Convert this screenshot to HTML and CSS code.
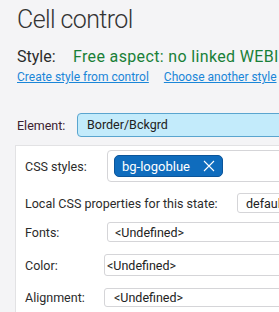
FILE: index.html
```html
<!DOCTYPE html>
<html>
<head>
<meta charset="utf-8">
<link rel="stylesheet" href="styles.css">
</head>
<body>
<div class="page">
  <h1 class="title">Cell control</h1>
  <div class="style-row">
    <span class="style-label">Style:</span>
    <span class="style-value">Free aspect: no linked WEBI</span>
  </div>
  <div class="links">
    <a class="link" href="#">Create style from control</a>
    <a class="link" href="#">Choose another style</a>
  </div>
  <div class="element-row">
    <span class="element-label">Element:</span>
    <div class="element-box">Border/Bckgrd</div>
  </div>
  <div class="panel">
    <div class="row row-css">
      <span class="label">CSS styles:</span>
      <div class="tag-box">
        <span class="tag">
          <span class="tag-text">bg-logoblue</span>
          <svg class="tag-x" width="12" height="12" viewBox="0 0 12 12"><path d="M1 1 L11 11 M11 1 L1 11" stroke="#fff" stroke-width="1.1" fill="none"/></svg>
        </span>
      </div>
    </div>
    <div class="row row-local">
      <span class="label label-wide">Local CSS properties for this state:</span>
      <div class="field field-local">default</div>
    </div>
    <div class="row row-fonts">
      <span class="label">Fonts:</span>
      <div class="field field-fonts">&lt;Undefined&gt;</div>
    </div>
    <div class="row row-color">
      <span class="label">Color:</span>
      <div class="field field-color">&lt;Undefined&gt;</div>
    </div>
    <div class="row row-align">
      <span class="label">Alignment:</span>
      <div class="field field-align">&lt;Undefined&gt;</div>
    </div>
  </div>
</div>
</body>
</html>
```
FILE: styles.css
```css
html, body {
  margin: 0;
  padding: 0;
  background: #f4f4f6;
  overflow: hidden;
}
body {
  width: 279px;
  height: 312px;
  font-family: Roboto, "Open Sans", sans-serif;
  color: #2b2b2b;
}
.page {
  padding-left: 17px;
  width: 500px;
}
.title {
  margin: 0;
  padding-top: 3px;
  font-size: 25px;
  font-weight: 300;
  line-height: 34px;
  color: #333;
  letter-spacing: -0.6px;
}
.style-row {
  display: flex;
  margin-top: 10px;
  font-size: 16px;
  line-height: 20px;
  white-space: nowrap;
}
.style-label {
  width: 56px;
  color: #2b2b2b;
}
.style-value {
  color: #198038;
  letter-spacing: 0.35px;
}
.links {
  display: flex;
  gap: 15px;
  margin-top: 2px;
  font-size: 12px;
  line-height: 16px;
  white-space: nowrap;
}
.link {
  color: #1a86d8;
  text-decoration: underline;
}
.element-row {
  display: flex;
  align-items: center;
  margin-top: 28px;
  height: 24px;
}
.element-label {
  width: 60px;
  font-size: 12.5px;
  color: #3a2230;
}
.element-box {
  flex: 1;
  height: 22px;
  line-height: 22px;
  border: 1px solid #5aa5cf;
  border-radius: 4px;
  background: #c3ebfb;
  padding-left: 9px;
  font-size: 12.5px;
  color: #222;
}
.panel {
  margin-top: 8px;
  margin-left: -2px;
  background: #fff;
  border: 1px solid #e2e2e4;
  padding: 4px 0 20px 9px;
  font-size: 12.5px;
}
.row {
  display: flex;
  align-items: center;
  white-space: nowrap;
}
.label {
  width: 82px;
  flex: none;
  color: #2b2b2b;
}
.label-wide {
  width: 212px;
}
.row-css { height: 32px; }
.row-local { height: 20px; margin-top: 11px; }
.row-fonts { height: 20px; margin-top: 9px; }
.row-color { height: 22px; margin-top: 12px; }
.row-align { height: 19px; margin-top: 12px; }
.tag-box {
  flex: 1;
  height: 30px;
  border: 1px solid #d5d5d8;
  border-radius: 4px;
  display: flex;
  align-items: center;
  padding-left: 6px;
}
.tag {
  display: flex;
  align-items: center;
  width: 109px;
  height: 22px;
  box-sizing: border-box;
  background: #0f6cbd;
  border: 1px solid #0b559a;
  border-radius: 5px;
  padding-left: 7px;
  color: #fff;
  font-size: 13px;
}
.tag-text {
  flex: 1;
}
.tag-x {
  margin-right: 7px;
}
.field {
  flex: 1;
  box-sizing: border-box;
  height: 100%;
  border: 1px solid #d5d5d8;
  border-radius: 3px;
  display: flex;
  align-items: center;
  color: #222;
}
.field-local { padding-left: 8px; }
.field-fonts { padding-left: 7px; }
.field-color { margin-left: -3px; padding-left: 2px; }
.field-align { margin-left: -3px; padding-left: 9px; }
```
